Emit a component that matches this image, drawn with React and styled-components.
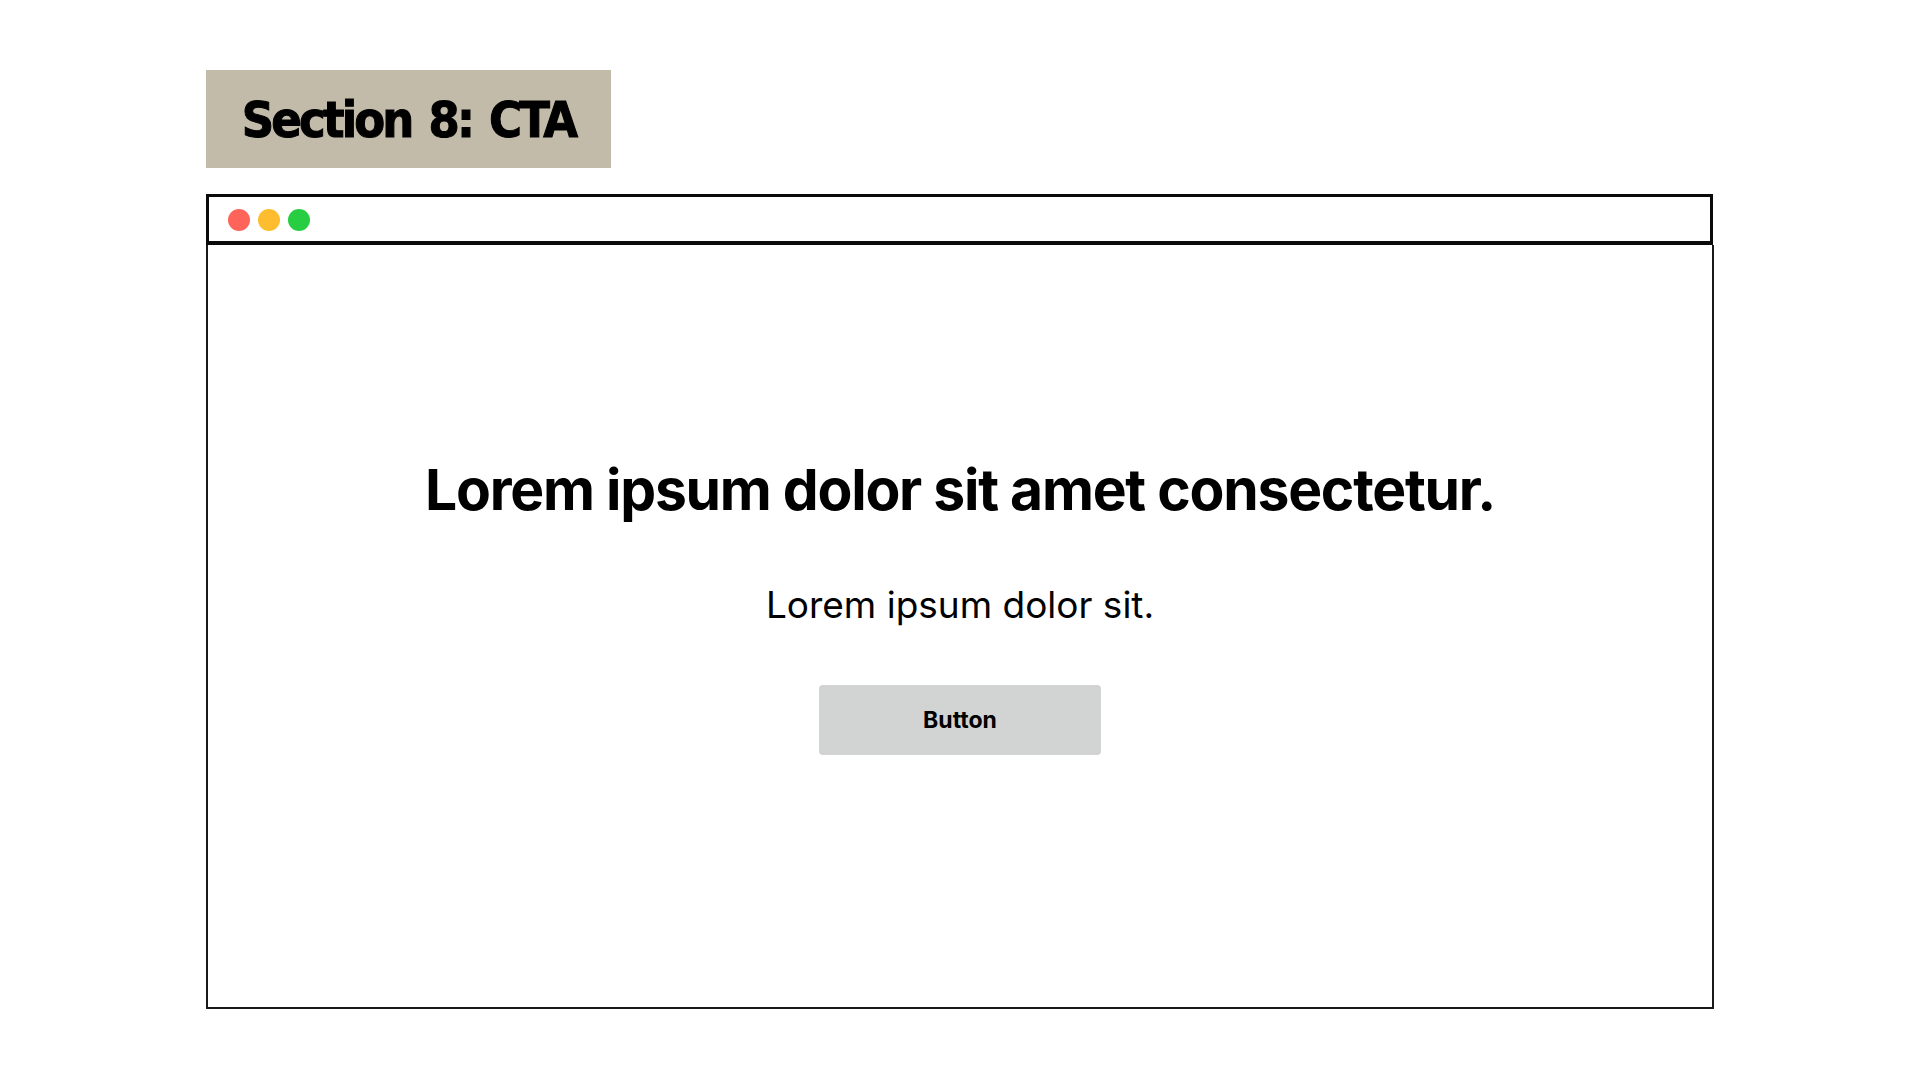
import React from "react";
import styled, { createGlobalStyle } from "styled-components";

const Global = createGlobalStyle`
  html, body { margin: 0; padding: 0; background: #ffffff; }
  body { font-family: "Inter", "Liberation Sans", sans-serif; }
`;

const Page = styled.div`
  width: 1920px;
  height: 1080px;
  box-sizing: border-box;
  padding: 70px 206px 0 206px;
  display: flex;
  flex-direction: column;
  gap: 26px;
`;

const Label = styled.div`
  width: 405px;
  height: 98px;
  background: #c3bba9;
  display: flex;
  align-items: center;
  justify-content: center;
  padding-top: 2px;
  box-sizing: border-box;
  font-family: "DejaVu Sans", sans-serif;
  font-stretch: condensed;
  font-weight: 700;
  font-size: 50px;
  color: #000;
  letter-spacing: -2.8px;
  word-spacing: 4px;
  -webkit-text-stroke: 1px #000;
`;

const Frame = styled.div`
  width: 1508px;
  display: flex;
  flex-direction: column;
`;

const TitleBar = styled.div`
  box-sizing: border-box;
  width: 1507px;
  height: 51px;
  border: 3px solid #0a0a0a;
  border-bottom-width: 4px;
  display: flex;
  align-items: center;
  gap: 8px;
  padding: 2px 0 0 19px;
`;

const Dot = styled.span`
  width: 22px;
  height: 22px;
  border-radius: 50%;
  background: ${(p) => p.$color};
`;

const Body = styled.div`
  box-sizing: border-box;
  height: 764px;
  border: 2px solid #1a1a1a;
  border-top: none;
  display: flex;
  flex-direction: column;
  align-items: center;
  padding-top: 216px;
`;

const Heading = styled.h1`
  margin: 0;
  font-family: "Inter", "Liberation Sans", sans-serif;
  font-weight: 700;
  font-size: 57px;
  line-height: 1;
  letter-spacing: -1.25px;
  color: #000;
`;

const Sub = styled.p`
  margin: 68px 0 0 0;
  font-family: "Inter", "Liberation Sans", sans-serif;
  font-weight: 400;
  font-size: 37px;
  line-height: 1;
  color: #000;
`;

const Button = styled.button`
  margin-top: 62px;
  width: 282px;
  height: 70px;
  border: none;
  border-radius: 4px;
  background: #d2d3d3;
  font-family: "Inter", "Liberation Sans", sans-serif;
  font-weight: 700;
  font-size: 23px;
  color: #000;
`;

export default function App() {
  return (
    <>
      <Global />
      <Page>
        <Label>Section 8: CTA</Label>
        <Frame>
          <TitleBar>
            <Dot $color="#fe645a" />
            <Dot $color="#fdbd2f" />
            <Dot $color="#27ce42" />
          </TitleBar>
          <Body>
            <Heading>Lorem ipsum dolor sit amet consectetur.</Heading>
            <Sub>Lorem ipsum dolor sit.</Sub>
            <Button>Button</Button>
          </Body>
        </Frame>
      </Page>
    </>
  );
}
